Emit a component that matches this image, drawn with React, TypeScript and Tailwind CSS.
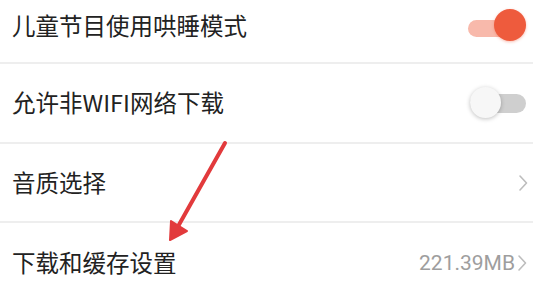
import React from "react";

const Chevron = () => (
  <svg width="10" height="18" viewBox="0 0 10 18" className="shrink-0">
    <path d="M2 2 L8.5 9 L2 16" fill="none" stroke="#bdbdbd" strokeWidth="1.6" strokeLinecap="round" strokeLinejoin="round" />
  </svg>
);

const Sep = () => <div className="h-[2px] w-full bg-[#eeeeee]" />;

export default function App() {
  const cjk = { fontFamily: '"Noto Sans CJK SC", "Noto Sans", sans-serif' };
  return (
    <div className="relative w-[533px] h-[292px] overflow-hidden bg-white" style={cjk}>
      <div className="flex flex-col">
        <div className="h-[62px] flex items-center justify-between pl-[12px] pr-[7px] pb-[10px]">
          <span className="text-[23.5px] leading-none text-[#222222]">儿童节目使用哄睡模式</span>
          <div className="relative w-[58px] h-[34px] flex items-center">
            <div className="w-[56px] h-[17px] rounded-full bg-[#f8b9ab] mt-[4px]" />
            <div className="absolute right-0 top-[0px] w-[32px] h-[32px] rounded-full bg-[#ee5b3d] shadow-[0_1px_3px_rgba(238,91,61,0.4)]" />
          </div>
        </div>
        <Sep />
        <div className="h-[78px] flex items-center justify-between pl-[12px] pr-[7px]">
          <span className="text-[23.5px] leading-none text-[#222222]">允许非WIFI网络下载</span>
          <div className="relative w-[56px] h-[32px] flex items-center">
            <div className="w-[56px] h-[19px] rounded-full bg-[#cfcfcf]" />
            <div className="absolute left-0 top-0 w-[31px] h-[31px] rounded-full bg-[#f7f7f7] shadow-[0_1px_4px_rgba(0,0,0,0.25)]" />
          </div>
        </div>
        <Sep />
        <div className="h-[77px] flex items-center justify-between pl-[12px] pr-[5px]">
          <span className="text-[23.5px] leading-none text-[#222222]">音质选择</span>
          <Chevron />
        </div>
        <Sep />
        <div className="h-[80px] flex items-center justify-between pl-[12px] pr-[6px]">
          <span className="text-[23.5px] leading-none text-[#222222]">下载和缓存设置</span>
          <div className="flex items-center gap-[2px]">
            <span className="text-[21px] leading-none text-[#9e9e9e]" style={{ fontFamily: 'Roboto, "Noto Sans", sans-serif' }}>221.39MB</span>
            <Chevron />
          </div>
        </div>
      </div>
      <svg className="absolute left-0 top-0 pointer-events-none" width="533" height="292" viewBox="0 0 533 292">
        <line x1="225" y1="143" x2="176" y2="230" stroke="#e23a3c" strokeWidth="4" strokeLinecap="round" />
        <polygon points="170,240 171,221 187,231" fill="#e23a3c" stroke="#e23a3c" strokeWidth="2" strokeLinejoin="round" />
      </svg>
    </div>
  );
}
